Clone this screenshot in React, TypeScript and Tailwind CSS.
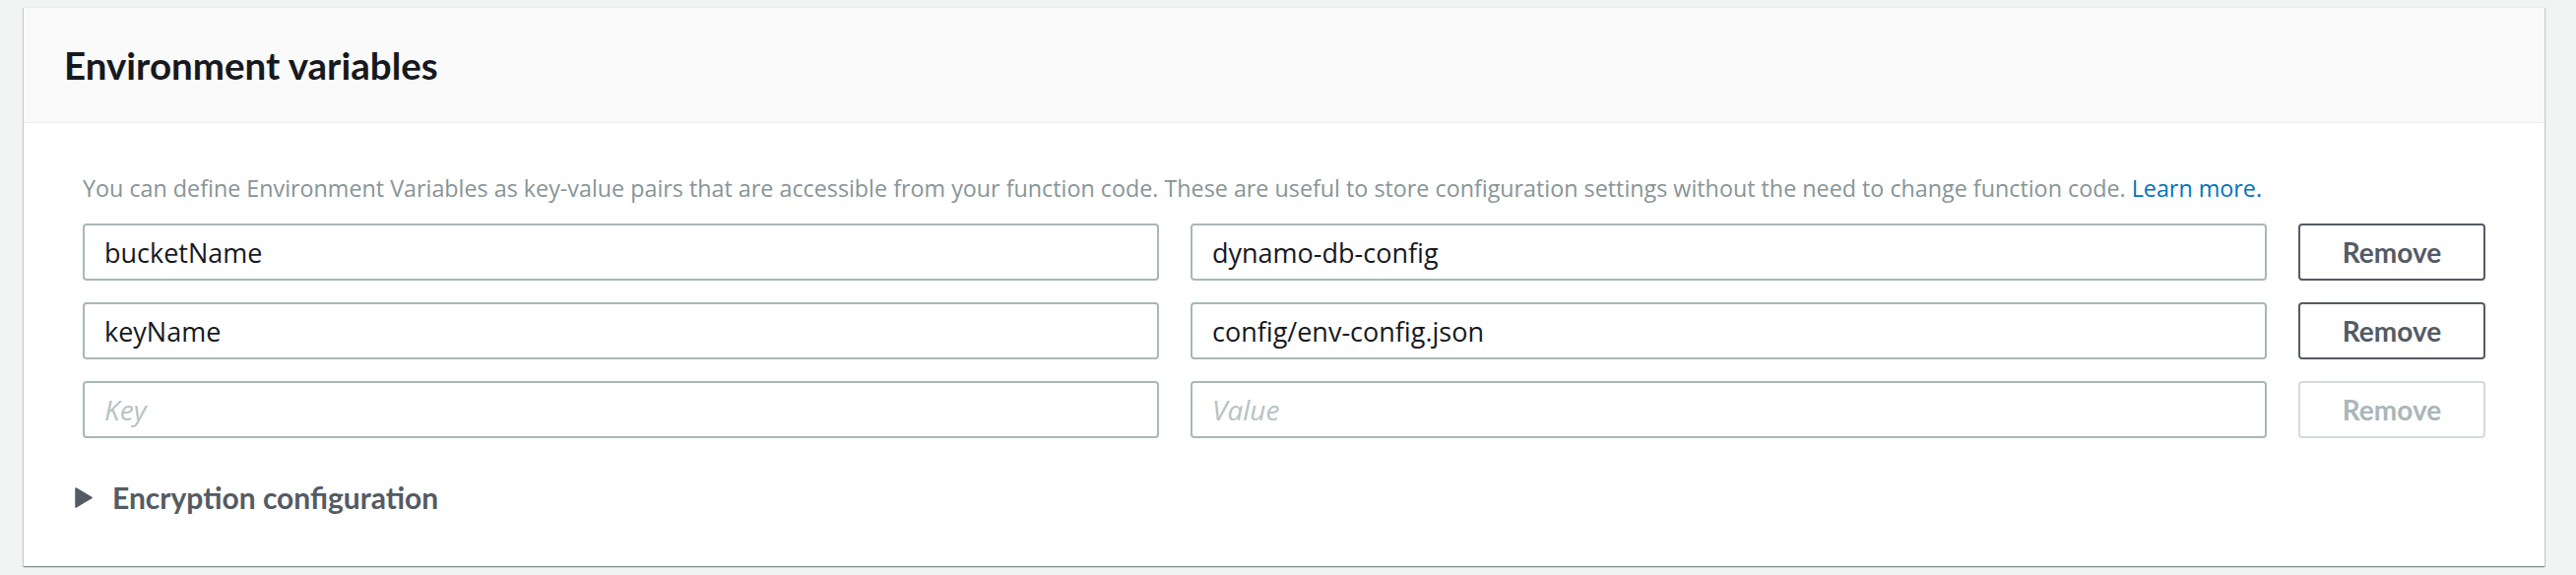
const rows = [
  { k: "bucketName", v: "dynamo-db-config", on: true },
  { k: "keyName", v: "config/env-config.json", on: true },
  { k: "", v: "", on: false },
]

export default function App() {
  return (
    <div className="min-h-[584px] w-full bg-[#f2f3f3] pl-[24px] pr-[32px] pt-[7px] font-['Open_Sans',sans-serif]">
      <div className="w-full border-t border-[#eaeded] bg-white shadow-[0_1px_1px_0_rgba(0,28,36,0.3),1px_1px_1px_0_rgba(0,28,36,0.15),-1px_1px_1px_0_rgba(0,28,36,0.15)]">
        {/* Header */}
        <div className="flex h-[117px] items-center border-b border-[#eaeded] bg-[#fafafa] pl-[41px]">
          <h2 className="font-['Lato',sans-serif] text-[38.5px] font-bold leading-none text-[#16191f]">
            Environment variables
          </h2>
        </div>

        {/* Body */}
        <div className="px-[60px] pb-[50px] pt-[50px]">
          <p className="text-[23.3px] leading-[32px] text-[#879596]">
            You can define Environment Variables as key-value pairs that are accessible from your function code. These are useful to store configuration settings without the need to change function code.{" "}
            <a href="#" className="text-[#0073bb]">
              Learn more.
            </a>
          </p>

          <div className="mt-[20px] flex flex-col gap-[22px]">
            {rows.map((r, i) => (
              <div key={i} className="flex items-center gap-[32px]">
                <input
                  readOnly
                  defaultValue={r.k}
                  placeholder="Key"
                  className="h-[58px] min-w-0 flex-1 rounded-[4px] border-2 border-[#aab7b8] bg-white px-[20px] text-[27px] text-[#16191f] outline-none placeholder:text-[28px] placeholder:italic placeholder:text-[#b8c2c3]"
                />
                <input
                  readOnly
                  defaultValue={r.v}
                  placeholder="Value"
                  className="h-[58px] min-w-0 flex-1 rounded-[4px] border-2 border-[#aab7b8] bg-white px-[20px] text-[27px] text-[#16191f] outline-none placeholder:text-[28px] placeholder:italic placeholder:text-[#b8c2c3]"
                />
                {r.on ? (
                  <button className="h-[58px] w-[190px] rounded-[4px] border-2 border-[#545b64] bg-white font-['Lato',sans-serif] text-[28px] font-bold text-[#545b64]">
                    Remove
                  </button>
                ) : (
                  <button
                    disabled
                    className="h-[58px] w-[190px] rounded-[4px] border-2 border-[#d5dbdb] bg-white font-['Lato',sans-serif] text-[28px] font-bold text-[#aab7b8]"
                  >
                    Remove
                  </button>
                )}
              </div>
            ))}
          </div>

          {/* Expander */}
          <div className="-ml-[8px] mt-[40px] flex h-[40px] items-center gap-[20px]">
            <svg width="18" height="21" viewBox="0 0 18 21" className="shrink-0">
              <path d="M1 1 L17 10.5 L1 20 Z" fill="#545b64" stroke="#545b64" strokeWidth="1.5" strokeLinejoin="round" />
            </svg>
            <span className="font-['Lato',sans-serif] text-[30px] font-bold text-[#545b64]">
              Encryption configuration
            </span>
          </div>
        </div>
      </div>
    </div>
  )
}
